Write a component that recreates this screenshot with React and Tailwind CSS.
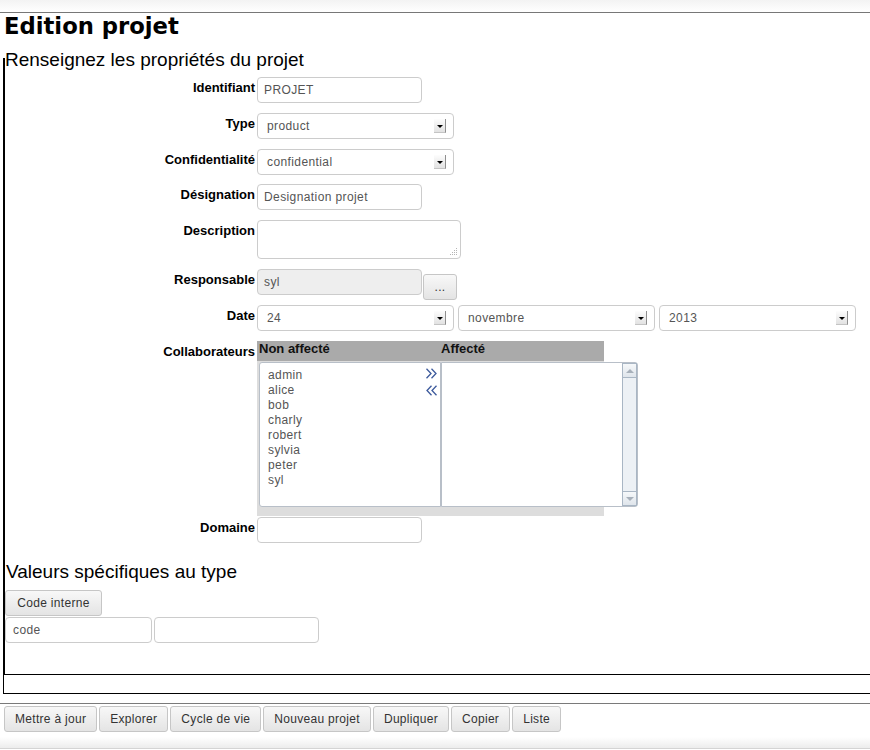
import React from "react";

function SelArrow() {
  return (
    <span className="flex h-[14px] w-[12px] shrink-0 items-center justify-center border-r border-b border-r-[#8f8f8f] border-b-[#c4c4c4] bg-linear-to-b from-[#fdfdfd] to-[#e2e2e2]">
      <span className="mt-[1px] h-0 w-0 border-x-[3px] border-t-[3px] border-x-transparent border-t-black" />
    </span>
  );
}

function Select({ value }) {
  return (
    <div className="flex h-[26px] w-[197px] shrink-0 items-center justify-between rounded-[4px] border border-[#cccccc] bg-white pl-[9px] pr-[7px] text-[12px] tracking-[0.4px] text-[#555555]">
      <span className="leading-[15px]">{value}</span>
      <SelArrow />
    </div>
  );
}

function TextInput({ value = "", className = "" }) {
  return (
    <div
      className={
        "flex h-[26px] shrink-0 items-center rounded-[4px] border border-[#cccccc] pl-[6px] text-[12px] tracking-[0.4px] text-[#555555] " +
        className
      }
    >
      <span className="leading-[15px]">{value}</span>
    </div>
  );
}

function Btn({ children, className = "" }) {
  return (
    <div
      className={
        "flex h-[26px] shrink-0 items-center justify-center rounded-[3px] border border-[#c6c6c6] bg-linear-to-b from-[#f8f8f8] to-[#e4e4e4] px-[10px] text-[12px] tracking-[0.3px] text-[#333333] " +
        className
      }
    >
      {children}
    </div>
  );
}

function Row({ label, children, className = "" }) {
  return (
    <div className={"flex items-start " + className}>
      <div className="w-[250px] shrink-0 pt-[3px] text-right text-[13px] font-bold leading-[15px] text-black">
        {label}
      </div>
      <div className="ml-[2px] flex items-start">{children}</div>
    </div>
  );
}

function ChevRight() {
  return (
    <svg width="13" height="11" viewBox="0 0 13 11" fill="none">
      <path d="M1.5 0.8 L6 5.5 L1.5 10.2 M6.5 0.8 L11 5.5 L6.5 10.2" stroke="#3d5a9c" strokeWidth="1.3" />
    </svg>
  );
}

function ChevLeft() {
  return (
    <svg width="13" height="11" viewBox="0 0 13 11" fill="none">
      <path d="M6.5 0.8 L2 5.5 L6.5 10.2 M11.5 0.8 L7 5.5 L11.5 10.2" stroke="#3d5a9c" strokeWidth="1.3" />
    </svg>
  );
}

function ScrollBtn({ up }) {
  return (
    <div className="flex h-[15px] items-center justify-center border border-[#a9b6c4] bg-linear-to-b from-[#f6f8fa] to-[#dfe5eb]">
      {up ? (
        <span className="h-0 w-0 border-x-[4px] border-b-[4px] border-x-transparent border-b-[#a7b0ba]" />
      ) : (
        <span className="h-0 w-0 border-x-[4px] border-t-[4px] border-x-transparent border-t-[#a7b0ba]" />
      )}
    </div>
  );
}

export default function App() {
  const users = ["admin", "alice", "bob", "charly", "robert", "sylvia", "peter", "syl"];
  return (
    <div className="h-[750px] w-[870px] overflow-hidden bg-white font-['Liberation_Sans',Arial,sans-serif] text-black">
      <div className="h-[12px] bg-linear-to-b from-[#f3f3f3] to-white" />
      <div className="border-t border-[#777777]" />
      <h1 className="pl-[4px] font-['DejaVu_Sans',sans-serif] text-[22.7px] font-bold leading-[27px]">
        Edition projet
      </h1>
      <h2 className="mt-[9px] pl-[5px] text-[19px] leading-[22px]">Renseignez les propriétés du projet</h2>

      <div className="-mt-[13px] ml-[3px] border-b border-l border-black pb-[18px]">
        <div className="border-b border-l border-black pb-[31px] pt-[19px]">
          <Row label="Identifiant">
            <TextInput value="PROJET" className="w-[165px] bg-white" />
          </Row>
          <Row label="Type" className="mt-[10px]">
            <Select value="product" />
          </Row>
          <Row label="Confidentialité" className="mt-[10px]">
            <Select value="confidential" />
          </Row>
          <Row label="Désignation" className="mt-[9px]">
            <TextInput value="Designation projet" className="w-[165px] bg-white" />
          </Row>
          <Row label="Description" className="mt-[10px]">
            <div className="flex h-[39px] w-[204px] items-end justify-end rounded-[4px] border border-[#cccccc] bg-white p-[3px]">
              <svg width="7" height="7" viewBox="0 0 7 7">
                <rect x="6" y="0" width="1" height="1" fill="#b5b5b5" />
                <rect x="6" y="2" width="1" height="1" fill="#b5b5b5" />
                <rect x="4" y="2" width="1" height="1" fill="#b5b5b5" />
                <rect x="6" y="4" width="1" height="1" fill="#b5b5b5" />
                <rect x="4" y="4" width="1" height="1" fill="#b5b5b5" />
                <rect x="2" y="4" width="1" height="1" fill="#b5b5b5" />
                <rect x="6" y="6" width="1" height="1" fill="#b5b5b5" />
                <rect x="4" y="6" width="1" height="1" fill="#b5b5b5" />
                <rect x="2" y="6" width="1" height="1" fill="#b5b5b5" />
                <rect x="0" y="6" width="1" height="1" fill="#b5b5b5" />
              </svg>
            </div>
          </Row>
          <Row label="Responsable" className="mt-[10px]">
            <TextInput value="syl" className="w-[165px] bg-[#eeeeee]" />
            <Btn className="ml-[1px] mt-[5px] w-[34px] px-0">...</Btn>
          </Row>
          <Row label="Date" className="mt-[5px]">
            <div className="flex gap-[4px]">
              <Select value="24" />
              <Select value="novembre" />
              <Select value="2013" />
            </div>
          </Row>
          <Row label="Collaborateurs" className="mt-[10px]">
            <div className="w-[347px] bg-[#dddddd]">
              <div className="flex h-[20px] bg-[#aaaaaa] text-[13px] font-bold leading-[15px] text-[#111111]">
                <span className="w-[184px] pl-[2px]">Non affecté</span>
                <span>Affecté</span>
              </div>
              <div className="flex pb-[9px] pl-[2px] pt-[1px]">
                <div className="flex h-[145px] w-[182px] shrink-0 justify-between rounded-l-[3px] border border-[#b8bfc8] bg-white">
                  <div className="pl-[8px] pt-[5px] text-[12px] leading-[15px] tracking-[0.4px] text-[#555555]">
                    {users.map((u) => (
                      <div key={u}>{u}</div>
                    ))}
                  </div>
                  <div className="flex flex-col gap-[6px] pr-[2px] pt-[5px]">
                    <ChevRight />
                    <ChevLeft />
                  </div>
                </div>
                <div className="flex h-[145px] w-[197px] shrink-0 rounded-r-[3px] border border-[#b8bfc8] bg-white">
                  <div className="flex-1" />
                  <div className="flex w-[15px] flex-col bg-[#edf1f5]">
                    <ScrollBtn up />
                    <div className="flex-1 border-x border-[#a9b6c4]" />
                    <ScrollBtn />
                  </div>
                </div>
              </div>
            </div>
          </Row>
          <Row label="Domaine" className="mt-[1px]">
            <TextInput className="w-[165px] bg-white" />
          </Row>

          <h2 className="mt-[18px] pl-[1px] text-[19px] leading-[22px]">Valeurs spécifiques au type</h2>
          <Btn className="mt-[7px] w-[97px]">Code interne</Btn>
          <div className="mt-[1px] flex gap-[2px]">
            <TextInput value="code" className="w-[147px] bg-white pl-[7px]" />
            <TextInput className="w-[165px] bg-white" />
          </div>
        </div>
      </div>

      <div className="mt-[9px] border-t border-[#7a7a7a]" />
      <div className="mt-[2px] flex gap-[2px] pl-[4px]">
        <Btn>Mettre à jour</Btn>
        <Btn>Explorer</Btn>
        <Btn>Cycle de vie</Btn>
        <Btn>Nouveau projet</Btn>
        <Btn>Dupliquer</Btn>
        <Btn>Copier</Btn>
        <Btn>Liste</Btn>
      </div>
      <div className="mt-[5px] h-[12px] border-b border-[#d4d4d4] bg-linear-to-b from-white to-[#ececec]" />
    </div>
  );
}
